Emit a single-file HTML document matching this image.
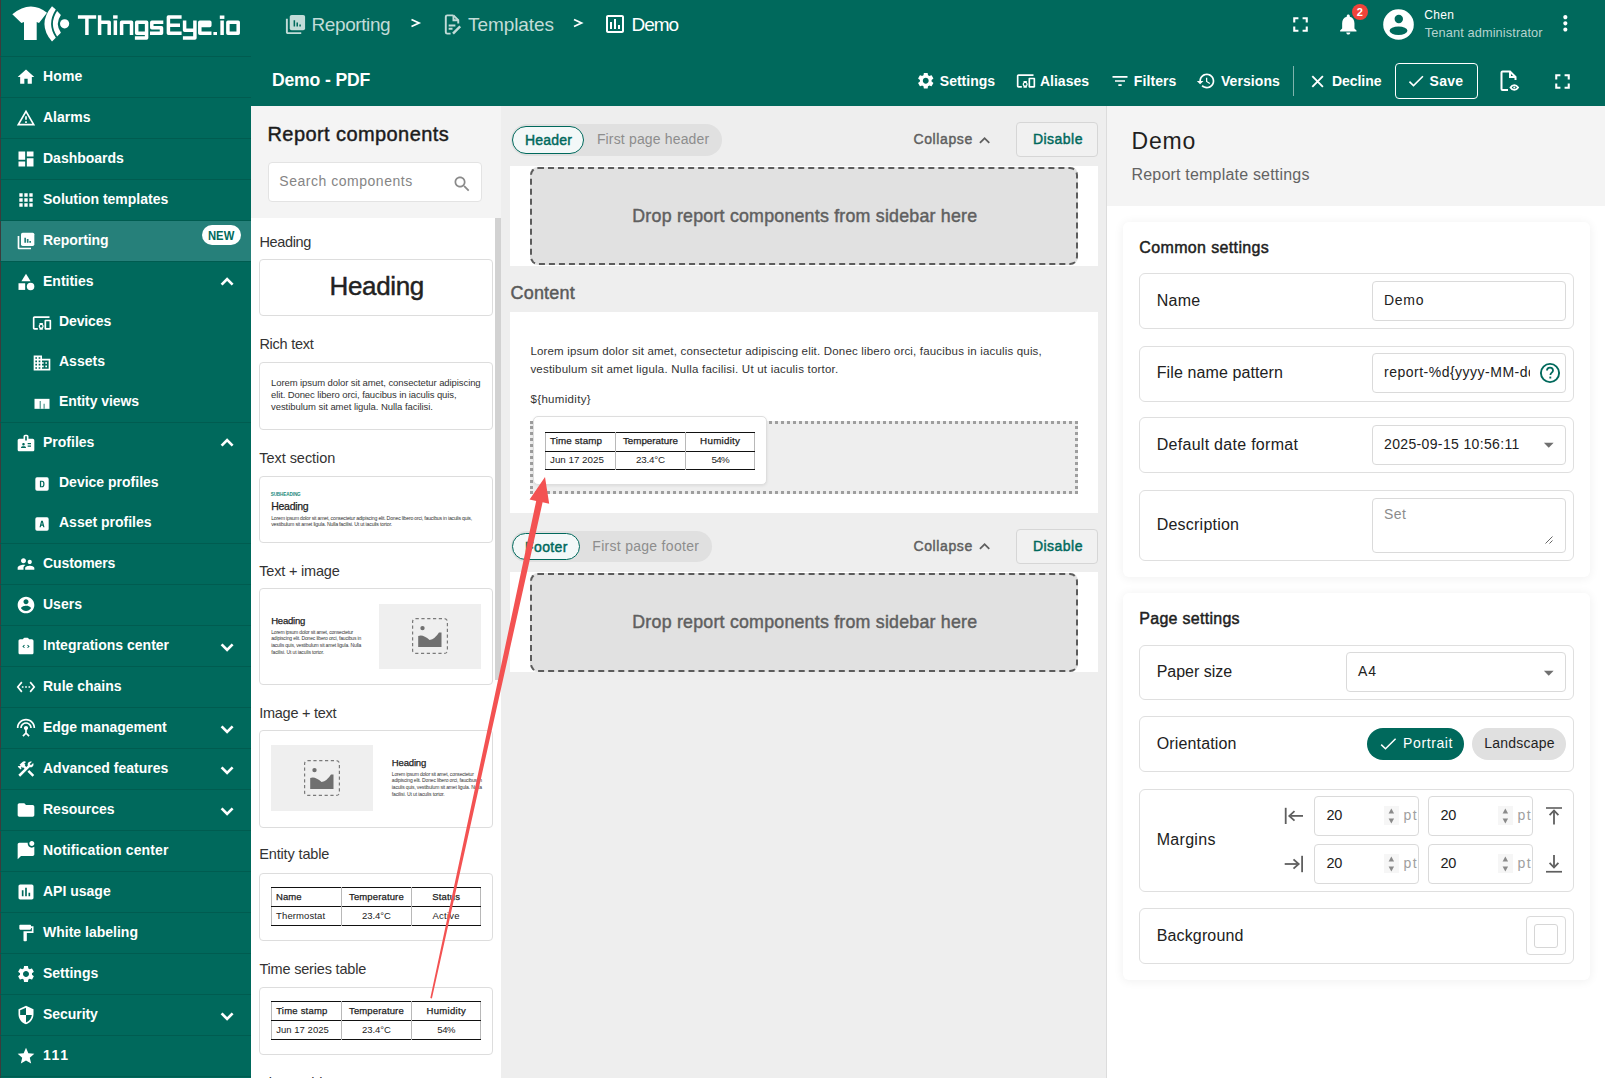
<!DOCTYPE html>
<html><head><meta charset="utf-8">
<style>
*{box-sizing:border-box;margin:0;padding:0}
html,body{width:1605px;height:1078px;overflow:hidden;font-family:"Liberation Sans",sans-serif;background:#fff;position:relative}
.a{position:absolute}
.t{position:absolute;line-height:1;white-space:nowrap}
svg{position:absolute;display:block}
#side{position:absolute;left:0;top:0;width:251px;height:1078px;background:#00695c}
#side .sep{position:absolute;left:0;width:251px;height:1px;background:#005c50}
#side .t{color:#fff;font-weight:bold;font-size:14px}
#side svg{fill:#fff}
#topbar{position:absolute;left:251px;top:0;width:1354px;height:106px;background:#00695c}
#comp{position:absolute;left:251px;top:106px;width:250px;height:972px;background:#fff;overflow:hidden}
#canvas{position:absolute;left:501px;top:106px;width:605px;height:972px;background:#eeeeee;overflow:hidden}
#right{position:absolute;left:1106px;top:106px;width:499px;height:972px;background:#fff;overflow:hidden}
</style></head>
<body>
<div id="side">
  <div class="a" style="left:0;top:0;width:1px;height:1078px;background:#3c3c3c"></div>
  <!-- logo -->
  <svg style="left:0;top:0" width="80" height="50" viewBox="0 0 80 50">
    <path fill="#fff" d="M12.3 14.3 Q30.25 -0.5 47 12.8 L39 23 L36.7 22 L36.7 40 L24 40 L24 22 L21.4 23 Z"></path>
    <path fill="#fff" d="M52 6.2 L55.8 9.6 Q46.4 24 55.8 37.8 L52 41.6 Q36.9 24 52 6.2 Z"></path>
    <path fill="#fff" d="M57.1 11.1 L60.9 15.1 Q54.7 24 60.9 32.7 L57.1 36.5 Q48.7 24 57.1 11.1 Z"></path>
    <circle fill="#fff" cx="64.6" cy="23.8" r="4.6"></circle>
  </svg>
  <svg style="left:0;top:0" width="250" height="50" viewBox="0 0 250 50"><g fill="none" stroke="#fff" stroke-width="3.5" stroke-linejoin="round">
<path d="M77.9 16.9H96.2M86.9 16.9V35"></path>
<path d="M99.6 15.3V35M99.6 22.2H109.2V35"></path>
<path d="M115.35 20.4V35"></path>
<path d="M121.6 35V22.2H131.5V35"></path>
<path d="M146.6 33.3H136.7V22.2H146.6V38H134.9"></path>
<path d="M163.3 22.2H151.8V27.7H161.5V33.3H150"></path>
<path d="M181.6 17H168.4V33.3H181.6M168.4 25.2H180"></path>
<path d="M184.6 20.5V30.2H194.9M194.9 20.5V38H182.9"></path>
<path d="M211.5 33.3H199.8V22.2H209.8V25.5H199.8"></path>
<path d="M222.1 20.5V35"></path>
<path d="M227.9 22.2H238.2V33.3H227.9Z"></path>
</g><g fill="#fff"><rect x="113.1" y="15.3" width="4.5" height="3.4"></rect><rect x="213.4" y="32" width="3.6" height="3"></rect><rect x="219.8" y="15.5" width="4.6" height="3.4"></rect></g></svg>
  <div class="sep" style="top:56px"></div>
  <div id="menu">
<div class="sep" style="top:97px"></div>
<svg style="left:16px;top:67.0px" width="20" height="20" viewBox="0 0 24 24"><path d="M10 20v-6h4v6h5v-8h3L12 3 2 12h3v8z"></path></svg>
<div class="t" style="left: 43px; top: 69.1px; letter-spacing: 0.158px;">Home</div>
<div class="sep" style="top:138px"></div>
<svg style="left:16px;top:108.0px" width="20" height="20" viewBox="0 0 24 24"><path d="M12 5.99L19.53 19H4.47L12 5.99M12 2L1 21h22L12 2zm1 14h-2v2h2v-2zm0-6h-2v4h2v-4z"></path></svg>
<div class="t" style="left:43px;top:110.1px">Alarms</div>
<div class="sep" style="top:179px"></div>
<svg style="left:16px;top:149.0px" width="20" height="20" viewBox="0 0 24 24"><path d="M3 13h8V3H3v10zm0 8h8v-6H3v6zm10 0h8V11h-8v10zm0-18v6h8V3h-8z"></path></svg>
<div class="t" style="left:43px;top:151.1px">Dashboards</div>
<div class="sep" style="top:220px"></div>
<svg style="left:16px;top:190.0px" width="20" height="20" viewBox="0 0 24 24"><path d="M4 8h4V4H4v4zm6 12h4v-4h-4v4zm-6 0h4v-4H4v4zm0-6h4v-4H4v4zm6 0h4v-4h-4v4zm6-10v4h4V4h-4zm-6 4h4V4h-4v4zm6 6h4v-4h-4v4zm0 6h4v-4h-4v4z"></path></svg>
<div class="t" style="left:43px;top:192.1px">Solution templates</div>
<div class="a" style="left:1px;top:221px;width:250px;height:40px;background:#26807a"></div>
<div class="sep" style="top:261px"></div>
<svg style="left:16px;top:231.0px" width="20" height="20" viewBox="0 0 24 24"><path d="M4 6H2v14c0 1.1.9 2 2 2h14v-2H4V6z"></path><rect x="6" y="2" width="16" height="16" rx="2"></rect><path fill="#26807a" d="M10 14h2V8h-2zm3 0h2V9.5h-2zm3 0h2v-2h-2z"></path></svg>
<div class="t" style="left: 43px; top: 233.1px; letter-spacing: -0.054px;">Reporting</div>
<div class="a" style="left:202px;top:225px;width:39px;height:20px;border-radius:10px;background:#fff"></div>
<div class="t" style="left:208.3px;top:230px;font-size:12.5px;color:#00695c;transform:scaleX(0.9);transform-origin:0 0">NEW</div>
<svg style="left:16px;top:272.0px" width="20" height="20" viewBox="0 0 24 24"><path d="M12 2l-5.5 9h11z"></path><circle cx="17.5" cy="17.5" r="4.5"></circle><path d="M3 13.5h8v8H3z"></path></svg>
<div class="t" style="left:43px;top:274.1px">Entities</div>
<svg style="left:0;top:0;overflow:visible" width="1" height="1"><polyline points="221.6,284.6 227.1,279.1 232.6,284.6" fill="none" stroke="#fff" stroke-width="2.7"></polyline></svg>
<svg style="left:32px;top:312.5px" width="20" height="20" viewBox="0 0 24 24"><path d="M3 6h18V4H3c-1.1 0-2 .9-2 2v12c0 1.1.9 2 2 2h4v-2H3V6zm10 6H9v1.78c-.61.55-1 1.33-1 2.22s.39 1.67 1 2.22V20h4v-1.78c.61-.55 1-1.34 1-2.22s-.39-1.67-1-2.22V12zm-2 5.5c-.83 0-1.5-.67-1.5-1.5s.67-1.5 1.5-1.5 1.5.67 1.5 1.5-.67 1.5-1.5 1.5zM22 8h-6c-.5 0-1 .5-1 1v10c0 .5.5 1 1 1h6c.5 0 1-.5 1-1V9c0-.5-.5-1-1-1zm-1 10h-4v-8h4v8z"></path></svg>
<div class="t" style="left: 59px; top: 314px; letter-spacing: -0.126px;">Devices</div>
<svg style="left:32px;top:352.5px" width="20" height="20" viewBox="0 0 24 24"><path d="M12 7V3H2v18h20V7H12zM6 19H4v-2h2v2zm0-4H4v-2h2v2zm0-4H4V9h2v2zm0-4H4V5h2v2zm4 12H8v-2h2v2zm0-4H8v-2h2v2zm0-4H8V9h2v2zm0-4H8V5h2v2zm10 12h-8v-2h2v-2h-2v-2h2v-2h-2V9h8v10zm-2-8h-2v2h2v-2zm0 4h-2v2h2v-2z"></path></svg>
<div class="t" style="left:59px;top:354.0px">Assets</div>
<div class="sep" style="top:422px"></div>
<svg style="left:32px;top:392.5px" width="20" height="20" viewBox="0 0 24 24"><path d="M3 7h18v12H3z"></path><path fill="#00695c" d="M9.3 9.5h1v9.5h-1zM14 13h1v6h-1z"></path></svg>
<div class="t" style="left: 59px; top: 394px; letter-spacing: -0.086px;">Entity views</div>
<svg style="left:16px;top:433.0px" width="20" height="20" viewBox="0 0 24 24"><path d="M20 7h-5V4c0-1.1-.9-2-2-2h-2c-1.1 0-2 .9-2 2v3H4c-1.1 0-2 .9-2 2v11c0 1.1.9 2 2 2h16c1.1 0 2-.9 2-2V9c0-1.1-.9-2-2-2zM9 12c.83 0 1.5.67 1.5 1.5S9.83 15 9 15s-1.5-.67-1.5-1.5S8.17 12 9 12zm3 6H6v-.43c0-.6.36-1.15.92-1.39.64-.28 1.34-.43 2.08-.43s1.44.15 2.08.43c.55.24.92.78.92 1.39V18zm1-9h-2V4h2v5zm5 7.5h-4V15h4v1.5zm0-3h-4V12h4v1.5z"></path></svg>
<div class="t" style="left:43px;top:435.1px">Profiles</div>
<svg style="left:0;top:0;overflow:visible" width="1" height="1"><polyline points="221.6,445.6 227.1,440.1 232.6,445.6" fill="none" stroke="#fff" stroke-width="2.7"></polyline></svg>
<svg style="left:32px;top:473.5px" width="20" height="20" viewBox="0 0 24 24"><rect x="4" y="4" width="16" height="16" rx="2"></rect><path fill="#00695c" d="M9.5 8h2.5c2 0 3 1.3 3 4s-1 4-3 4H9.5zM11 9.4v5.2h1c1 0 1.5-.8 1.5-2.6s-.5-2.6-1.5-2.6z"></path></svg>
<div class="t" style="left:59px;top:475.0px">Device profiles</div>
<div class="sep" style="top:543px"></div>
<svg style="left:32px;top:513.5px" width="20" height="20" viewBox="0 0 24 24"><rect x="4" y="4" width="16" height="16" rx="2"></rect><path fill="#00695c" d="M9 16l2-8h2l2 8h-1.5l-.45-2h-2.1l-.45 2zm2.35-3.3h1.3L12 9.8z"></path></svg>
<div class="t" style="left:59px;top:515.0px">Asset profiles</div>
<div class="sep" style="top:584px"></div>
<svg style="left:16px;top:554.0px" width="20" height="20" viewBox="0 0 24 24"><path d="M16.5 12c1.38 0 2.49-1.12 2.49-2.5S17.88 7 16.5 7C15.12 7 14 8.12 14 9.5s1.12 2.5 2.5 2.5zM9 11c1.66 0 2.99-1.34 2.99-3S10.66 5 9 5C7.34 5 6 6.34 6 8s1.34 3 3 3zm7.5 3c-1.83 0-5.5.92-5.5 2.75V19h11v-2.25c0-1.830-3.67-2.75-5.5-2.75zM9 13c-2.33 0-7 1.17-7 3.5V19h7v-2.25c0-.85.33-2.34 2.37-3.47C10.5 13.1 9.66 13 9 13z"></path></svg>
<div class="t" style="left: 43px; top: 556.1px; letter-spacing: -0.095px;">Customers</div>
<div class="sep" style="top:625px"></div>
<svg style="left:16px;top:595.0px" width="20" height="20" viewBox="0 0 24 24"><path d="M12 2C6.48 2 2 6.48 2 12s4.48 10 10 10 10-4.48 10-10S17.52 2 12 2zm0 3c1.66 0 3 1.34 3 3s-1.34 3-3 3-3-1.34-3-3 1.34-3 3-3zm0 14.2c-2.5 0-4.71-1.28-6-3.22.03-1.99 4-3.08 6-3.08 1.99 0 5.970 1.09 6 3.08-1.29 1.94-3.5 3.22-6 3.22z"></path></svg>
<div class="t" style="left:43px;top:597.1px">Users</div>
<div class="sep" style="top:666px"></div>
<svg style="left:16px;top:636.0px" width="20" height="20" viewBox="0 0 24 24"><path d="M19 4h-3.2C15.4 2.8 14.3 2 13 2h-2c-1.3 0-2.4.8-2.8 2H5c-1.1 0-2 .9-2 2v14c0 1.1.9 2 2 2h14c1.1 0 2-.9 2-2V6c0-1.1-.9-2-2-2z"></path><path fill="#00695c" d="M9.8 10.5l-2.2 2 2.2 2 .8-.8-1.4-1.2 1.4-1.2zm4.4 0l-.8.8 1.4 1.2-1.4 1.2.8.8 2.2-2z"></path></svg>
<div class="t" style="left:43px;top:638.1px">Integrations center</div>
<svg style="left:0;top:0;overflow:visible" width="1" height="1"><polyline points="221.6,644.4 227.1,649.9 232.6,644.4" fill="none" stroke="#fff" stroke-width="2.7"></polyline></svg>
<div class="sep" style="top:707px"></div>
<svg style="left:16px;top:677.0px" width="20" height="20" viewBox="0 0 24 24"><path d="M7.77 6.76L6.23 5.48.82 12l5.41 6.52 1.54-1.28L3.42 12l4.35-5.24zM7 13h2v-2H7v2zm10-2h-2v2h2v-2zm-6 2h2v-2h-2v2zm6.77-7.52l-1.54 1.28L20.58 12l-4.35 5.24 1.54 1.28L23.18 12l-5.41-6.52z"></path></svg>
<div class="t" style="left:43px;top:679.1px">Rule chains</div>
<div class="sep" style="top:748px"></div>
<svg style="left:16px;top:718.0px" width="20" height="20" viewBox="0 0 24 24"><path d="M12 5c-3.87 0-7 3.13-7 7h2c0-2.76 2.24-5 5-5s5 2.24 5 5h2c0-3.87-3.13-7-7-7zm1 9.29c.88-.39 1.5-1.26 1.5-2.29 0-1.38-1.12-2.5-2.5-2.5S9.5 10.62 9.5 12c0 1.02.62 1.9 1.5 2.29v3.3L7.59 21 9 22.41l3-3 3 3L16.41 21 13 17.59v-3.3zM12 1C5.930 1 1 5.93 1 12h2c0-4.97 4.03-9 9-9s9 4.03 9 9h2c0-6.07-4.93-11-11-11z"></path></svg>
<div class="t" style="left: 43px; top: 720.1px; letter-spacing: -0.05px;">Edge management</div>
<svg style="left:0;top:0;overflow:visible" width="1" height="1"><polyline points="221.6,726.4 227.1,731.9 232.6,726.4" fill="none" stroke="#fff" stroke-width="2.7"></polyline></svg>
<div class="sep" style="top:789px"></div>
<svg style="left:16px;top:759.0px" width="20" height="20" viewBox="0 0 24 24"><path d="M13.78 15.3l6 6 2.11-2.16-6-6zM17.5 10c1.93 0 3.5-1.57 3.5-3.5 0-.58-.16-1.12-.41-1.6l-2.7 2.7-1.49-1.49 2.7-2.7c-.48-.25-1.020-.41-1.6-.41C15.57 3 14 4.57 14 6.5c0 .41.08.8.21 1.16l-1.85 1.85-1.78-1.78.71-.71-1.41-1.41L12 3.49c-1.17-1.17-3.07-1.17-4.24 0L4.22 7.03l1.41 1.41H2.81l-.71.71 3.54 3.54.71-.71V9.15l1.41 1.41.71-.71 1.78 1.78-7.41 7.41 2.12 2.12L16.34 9.790c.36.13.75.21 1.16.21z"></path></svg>
<div class="t" style="left:43px;top:761.1px">Advanced features</div>
<svg style="left:0;top:0;overflow:visible" width="1" height="1"><polyline points="221.6,767.4 227.1,772.9 232.6,767.4" fill="none" stroke="#fff" stroke-width="2.7"></polyline></svg>
<div class="sep" style="top:830px"></div>
<svg style="left:16px;top:800.0px" width="20" height="20" viewBox="0 0 24 24"><path d="M10 4H4c-1.1 0-1.99.9-1.99 2L2 18c0 1.1.9 2 2 2h16c1.1 0 2-.9 2-2V8c0-1.1-.9-2-2-2h-8l-2-2z"></path></svg>
<div class="t" style="left:43px;top:802.1px">Resources</div>
<svg style="left:0;top:0;overflow:visible" width="1" height="1"><polyline points="221.6,808.4 227.1,813.9 232.6,808.4" fill="none" stroke="#fff" stroke-width="2.7"></polyline></svg>
<div class="sep" style="top:871px"></div>
<svg style="left:16px;top:841.0px" width="20" height="20" viewBox="0 0 24 24"><path d="M22 6.98V16c0 1.1-.9 2-2 2H6l-4 4V4c0-1.1.9-2 2-2h10.1c-.06.32-.1.66-.1 1 0 2.76 2.24 5 5 5 1.13 0 2.16-.39 3-1.02zM16 3c0 1.66 1.34 3 3 3s3-1.34 3-3-1.34-3-3-3-3 1.34-3 3z"></path></svg>
<div class="t" style="left: 43px; top: 843.1px; letter-spacing: 0.143px;">Notification center</div>
<div class="sep" style="top:912px"></div>
<svg style="left:16px;top:882.0px" width="20" height="20" viewBox="0 0 24 24"><path d="M19 3H5c-1.1 0-2 .9-2 2v14c0 1.1.9 2 2 2h14c1.1 0 2-.9 2-2V5c0-1.1-.9-2-2-2zM9 17H7v-7h2v7zm4 0h-2V7h2v10zm4 0h-2v-4h2v4z"></path></svg>
<div class="t" style="left:43px;top:884.1px">API usage</div>
<div class="sep" style="top:953px"></div>
<svg style="left:16px;top:923.0px" width="20" height="20" viewBox="0 0 24 24"><path d="M18 4V3c0-.55-.45-1-1-1H5c-.55 0-1 .45-1 1v4c0 .55.45 1 1 1h12c.55 0 1-.45 1-1V6h1v4H9v11c0 .55.45 1 1 1h2c.55 0 1-.45 1-1v-9h8V4h-3z"></path></svg>
<div class="t" style="left: 43px; top: 925.1px; letter-spacing: 0.007px;">White labeling</div>
<div class="sep" style="top:994px"></div>
<svg style="left:16px;top:964.0px" width="20" height="20" viewBox="0 0 24 24"><path d="M19.14 12.94c.04-.3.06-.61.06-.94 0-.32-.02-.64-.07-.94l2.03-1.58c.18-.14.23-.41.12-.61l-1.92-3.32c-.12-.22-.37-.29-.59-.22l-2.39.96c-.5-.38-1.03-.7-1.62-.94l-.36-2.54c-.04-.24-.24-.41-.48-.41h-3.84c-.24 0-.43.17-.47.41l-.36 2.54c-.59.24-1.13.57-1.62.94l-2.39-.96c-.22-.08-.47 0-.59.22L2.74 8.87c-.12.21-.08.47.12.61l2.03 1.58c-.05.3-.09.63-.09.94s.02.64.07.94l-2.03 1.58c-.18.14-.23.41-.12.61l1.92 3.32c.12.22.37.29.59.22l2.39-.96c.5.38 1.03.7 1.62.94l.36 2.54c.05.24.24.41.48.41h3.84c.24 0 .44-.17.47-.41l.36-2.54c.59-.24 1.13-.56 1.62-.94l2.39.96c.22.08.47 0 .59-.22l1.92-3.32c.12-.22.07-.47-.12-.61l-2.01-1.58zM12 15.6c-1.98 0-3.6-1.62-3.6-3.6s1.62-3.6 3.6-3.6 3.6 1.62 3.6 3.6-1.62 3.6-3.6 3.6z"></path></svg>
<div class="t" style="left:43px;top:966.1px">Settings</div>
<div class="sep" style="top:1035px"></div>
<svg style="left:16px;top:1005.0px" width="20" height="20" viewBox="0 0 24 24"><path d="M12 1L3 5v6c0 5.55 3.84 10.74 9 12 5.16-1.26 9-6.45 9-12V5l-9-4zm0 10.99h7c-.53 4.12-3.28 7.79-7 8.94V12H5V6.3l7-3.11v8.8z"></path></svg>
<div class="t" style="left: 43px; top: 1007.1px; letter-spacing: -0.053px;">Security</div>
<svg style="left:0;top:0;overflow:visible" width="1" height="1"><polyline points="221.6,1013.4 227.1,1018.9 232.6,1013.4" fill="none" stroke="#fff" stroke-width="2.7"></polyline></svg>
<div class="sep" style="top:1076px"></div>
<svg style="left:16px;top:1046.0px" width="20" height="20" viewBox="0 0 24 24"><path d="M12 17.27L18.18 21l-1.64-7.03L22 9.24l-7.19-.61L12 2 9.19 8.63 2 9.24l5.46 4.73L5.82 21z"></path></svg>
<div class="t" style="left: 43px; top: 1048.1px; letter-spacing: 1.576px;">111</div>
</div><!--menu-->
</div>
<div id="topbar">
</div>
<!-- topbar content (absolute page coords) -->
<div id="tb">
  <!-- breadcrumb -->
  <svg style="left:283.5px;top:12.5px" width="23" height="23" viewBox="0 0 24 24" fill="#c2dcd8"><path d="M4 6H2v14c0 1.1.9 2 2 2h14v-2H4V6z"></path><rect x="6" y="2" width="16" height="16" rx="2"></rect><path fill="#00695c" d="M10 14h1.6V7.5H10zm3 0h1.6V10h-1.6zm3 0h1.6v-2H16z"></path></svg>
  <div class="t" style="left: 311.5px; top: 14.9px; font-size: 19px; color: rgb(194, 220, 216); letter-spacing: -0.408px;">Reporting</div>
  <svg style="left:0;top:0" width="700" height="50" viewBox="0 0 700 50"><polyline points="411.5,19.5 419,23 411.5,26.5" fill="none" stroke="#fff" stroke-width="1.8"></polyline><polyline points="574,19.5 581.5,23 574,26.5" fill="none" stroke="#fff" stroke-width="1.8"></polyline></svg>
  <svg style="left:441px;top:12.5px" width="23" height="23" viewBox="0 0 24 24" fill="none" stroke="#c2dcd8" stroke-width="2"><path d="M13 2.5H6.5c-1 0-1.5.6-1.5 1.5v16c0 .9.5 1.5 1.5 1.5H10"></path><path d="M13 2.5l5 5V11"></path><path d="M13 2.5V7.5h5"></path><path d="M8 13h7M8 16.5h4"></path><path d="M12.5 21.5l7.5-7.5" stroke-width="2.6"></path></svg>
  <div class="t" style="left: 468px; top: 14.9px; font-size: 19px; color: rgb(194, 220, 216); letter-spacing: -0.072px;">Templates</div>
  <svg style="left:603px;top:12px" width="24" height="24" viewBox="0 0 24 24" fill="#fff"><path d="M9 17H7v-7h2v7zm4 0h-2V7h2v10zm4 0h-2v-4h2v4zm2 2H5V5h14v14.1V19zm0-16H5c-1.1 0-2 .9-2 2v14c0 1.1.9 2 2 2h14c1.1 0 2-.9 2-2V5c0-1.1-.9-2-2-2z"></path></svg>
  <div class="t" style="left: 631.5px; top: 14.9px; font-size: 19px; color: rgb(255, 255, 255); letter-spacing: -1.052px;">Demo</div>
  <!-- right icons -->
  <svg style="left:1287.8px;top:11.8px" width="25" height="25" viewBox="0 0 24 24" fill="#fff"><path d="M7 14H5v5h5v-2H7v-3zm-2-4h2V7h3V5H5v5zm12 7h-3v2h5v-5h-2v3zM14 5v2h3v3h2V5h-5z"></path></svg>
  <svg style="left:1335.5px;top:11.8px" width="24.6" height="24.6" viewBox="0 0 24 24" fill="#fff"><path d="M12 22c1.1 0 2-.9 2-2h-4c0 1.1.89 2 2 2zm6-6v-5c0-3.07-1.64-5.640-4.5-6.32V4c0-.83-.67-1.5-1.5-1.5s-1.5.67-1.5 1.5v.68C7.63 5.36 6 7.92 6 11v5l-2 2v1h16v-1l-2-2z"></path></svg>
  <div class="a" style="left:1351.8px;top:4px;width:16.4px;height:16.4px;border-radius:50%;background:#f0433a"></div>
  <div class="t" style="left:1356.8px;top:7px;font-size:11px;font-weight:bold;color:#fff">2</div>
  <svg style="left:1382.5px;top:8.5px" width="31" height="31" viewBox="0 0 31 31"><circle cx="15.5" cy="15.5" r="15.3" fill="#fff"></circle><circle cx="15.8" cy="10" r="4.2" fill="#00695c"></circle><ellipse cx="15.5" cy="21.8" rx="8.9" ry="4.2" fill="#00695c"></ellipse></svg>
  <div class="t" style="left: 1424.2px; top: 9px; font-size: 12px; color: rgb(255, 255, 255); letter-spacing: 0.384px;">Chen</div>
  <div class="t" style="left: 1424.8px; top: 26.7px; font-size: 12.8px; color: rgb(181, 211, 207); letter-spacing: 0.097px;">Tenant administrator</div>
  <svg style="left:1553.4px;top:11.4px" width="24.7" height="24.7" viewBox="0 0 24 24" fill="#fff"><path d="M12 8c1.1 0 2-.9 2-2s-.9-2-2-2-2 .9-2 2 .9 2 2 2zm0 2c-1.1 0-2 .9-2 2s.9 2 2 2 2-.9 2-2-.9-2-2-2zm0 6c-1.1 0-2 .9-2 2s.9 2 2 2 2-.9 2-2-.9-2-2-2z"></path></svg>
  <!-- row 2 -->
  <div class="t" style="left: 271.9px; top: 71.9px; font-size: 17.6px; font-weight: bold; color: rgb(255, 255, 255); letter-spacing: -0.143px;">Demo - PDF</div>
  <svg style="left:915.5px;top:71.3px" width="19.5" height="19.5" viewBox="0 0 24 24" fill="#fff"><path d="M19.14 12.94c.04-.3.06-.61.06-.94 0-.32-.02-.64-.07-.94l2.03-1.58c.18-.14.23-.41.12-.61l-1.92-3.32c-.12-.22-.37-.29-.59-.22l-2.39.96c-.5-.38-1.03-.7-1.62-.94l-.36-2.54c-.04-.24-.24-.41-.48-.41h-3.84c-.24 0-.43.17-.47.41l-.36 2.54c-.59.24-1.13.57-1.62.94l-2.39-.96c-.22-.08-.47 0-.59.22L2.74 8.87c-.12.21-.08.47.12.61l2.03 1.58c-.05.3-.09.63-.09.94s.02.64.07.94l-2.03 1.58c-.18.14-.23.41-.12.61l1.92 3.32c.12.22.37.29.59.22l2.39-.96c.5.38 1.03.7 1.62.94l.36 2.54c.05.24.24.41.48.41h3.84c.24 0 .44-.17.47-.41l.36-2.54c.59-.24 1.13-.56 1.62-.94l2.39.96c.22.08.47 0 .59-.22l1.92-3.32c.12-.22.07-.47-.12-.61l-2.01-1.58zM12 15.6c-1.98 0-3.6-1.62-3.6-3.6s1.62-3.6 3.6-3.6 3.6 1.62 3.6 3.6-1.62 3.6-3.6 3.6z"></path></svg>
  <div class="t" style="left: 939.8px; top: 73.8px; font-size: 14px; font-weight: bold; color: rgb(255, 255, 255); letter-spacing: 0.007px;">Settings</div>
  <svg style="left:1016px;top:71px" width="20" height="20" viewBox="0 0 24 24" fill="#fff"><path d="M3 6h18V4H3c-1.1 0-2 .9-2 2v12c0 1.1.9 2 2 2h4v-2H3V6zm10 6H9v1.78c-.61.55-1 1.33-1 2.22s.39 1.67 1 2.22V20h4v-1.78c.61-.55 1-1.34 1-2.22s-.39-1.67-1-2.22V12zm-2 5.5c-.83 0-1.5-.67-1.5-1.5s.67-1.5 1.5-1.5 1.5.67 1.5 1.5-.67 1.5-1.5 1.5zM22 8h-6c-.5 0-1 .5-1 1v10c0 .5.5 1 1 1h6c.5 0 1-.5 1-1V9c0-.5-.5-1-1-1zm-1 10h-4v-8h4v8z"></path></svg>
  <div class="t" style="left: 1040px; top: 73.8px; font-size: 14px; font-weight: bold; color: rgb(255, 255, 255); letter-spacing: -0.011px;">Aliases</div>
  <svg style="left:1109.5px;top:71px" width="20" height="20" viewBox="0 0 24 24" fill="#fff"><path d="M10 18h4v-2h-4v2zM3 6v2h18V6H3zm3 7h12v-2H6v2z"></path></svg>
  <div class="t" style="left: 1133.8px; top: 73.8px; font-size: 14px; font-weight: bold; color: rgb(255, 255, 255); letter-spacing: 0.094px;">Filters</div>
  <svg style="left:1196px;top:71px" width="20" height="20" viewBox="0 0 24 24" fill="#fff"><path d="M13 3c-4.97 0-9 4.03-9 9H1l3.89 3.89.07.14L9 12H6c0-3.87 3.13-7 7-7s7 3.13 7 7-3.13 7-7 7c-1.93 0-3.68-.79-4.94-2.06l-1.42 1.42C8.27 19.99 10.51 21 13 21c4.97 0 9-4.03 9-9s-4.03-9-9-9zm-1 5v5l4.28 2.54.72-1.21-3.5-2.08V8H12z"></path></svg>
  <div class="t" style="left: 1221px; top: 73.8px; font-size: 14px; font-weight: bold; color: rgb(255, 255, 255); letter-spacing: 0.058px;">Versions</div>
  <div class="a" style="left:1293px;top:66px;width:1px;height:30px;background:#7fb4ad"></div>
  <svg style="left:1305px;top:70px" width="24" height="24" viewBox="1305 70 24 24"><path d="M1312.3 76.2L1322.9 86.8M1322.9 76.2L1312.3 86.8" stroke="#fff" stroke-width="1.9" fill="none"></path></svg>
  <div class="t" style="left: 1331.9px; top: 73.8px; font-size: 14px; font-weight: bold; color: rgb(255, 255, 255); letter-spacing: -0.039px;">Decline</div>
  <div class="a" style="left:1395px;top:63px;width:83px;height:35.5px;border:1px solid #fff;border-radius:4px"></div>
  <svg style="left:1405.5px;top:71px" width="20" height="20" viewBox="0 0 24 24" fill="#fff"><path d="M9 16.17L4.83 12l-1.42 1.41L9 19 21 7l-1.41-1.41z"></path></svg>
  <div class="t" style="left: 1429.6px; top: 73.8px; font-size: 14px; font-weight: bold; color: rgb(255, 255, 255); letter-spacing: 0.226px;">Save</div>
  <svg style="left:1497px;top:69px" width="24" height="24" viewBox="0 0 24 24" fill="none" stroke="#fff" stroke-width="2"><path d="M11 21H5.5c-.6 0-1-.4-1-1V3.5c0-.6.4-1 1-1H13l5.5 5.5V11"></path><path d="M13 2.5V8h5.5"></path><path d="M13.5 18.5c1-1.6 2.3-2.4 3.8-2.4s2.8.8 3.8 2.4c-1 1.6-2.3 2.4-3.8 2.4s-2.8-.8-3.8-2.4z" stroke-width="1.8"></path><circle cx="17.3" cy="18.5" r="1" fill="#fff" stroke="none"></circle></svg>
  <svg style="left:1549.5px;top:68.5px" width="25" height="25" viewBox="0 0 24 24" fill="#fff"><path d="M7 14H5v5h5v-2H7v-3zm-2-4h2V7h3V5H5v5zm12 7h-3v2h5v-5h-2v3zM14 5v2h3v3h2V5h-5z"></path></svg>
</div>
<div id="comp"></div>
<div id="canvas"></div>
<div id="right"></div>
<!--COMP-->
<div class="a" style="left:251px;top:106px;width:250px;height:112px;background:#f4f4f4"></div>
<div class="t" style="left: 267.5px; top: 123.87px; font-size: 20px; -webkit-text-stroke: 0.45px rgb(28, 28, 28); color: rgb(28, 28, 28); letter-spacing: 0.416px;">Report components</div>
<div class="a" style="left:267.5px;top:162.3px;width:214px;height:39.4px;background:#fff;border:1px solid #e3e3e3;border-radius:4px"></div>
<div class="t" style="left: 279.3px; top: 174.05px; font-size: 14px; color: rgb(133, 133, 133); letter-spacing: 0.522px;">Search components</div>
<svg style="left:451.7px;top:174px" width="20.3" height="20.3" viewBox="0 0 24 24" fill="#8a8a8a"><path d="M15.5 14h-.79l-.28-.27C15.41 12.59 16 11.11 16 9.5 16 5.91 13.09 3 9.5 3S3 5.910 3 9.5 5.91 16 9.5 16c1.61 0 3.09-.59 4.23-1.57l.27.28v.79l5 4.99L20.49 19l-4.99-5zm-6 0C7.01 14 5 11.99 5 9.5S7.01 5 9.5 5 14 7.01 14 9.5 11.99 14 9.5 14z"></path></svg>
<div class="a" style="left:495px;top:218px;width:6px;height:462px;background:#d2d2d2"></div>
<div class="t" style="left: 259.4px; top: 235.33px; font-size: 14.5px; color: rgb(51, 51, 51); letter-spacing: -0.35px;">Heading</div>
<div class="a" style="left:259.4px;top:259.3px;width:233.60000000000002px;height:56.9px;border:1px solid #dddddd;border-radius:4px;background:#fff"></div>
<div class="t" style="left: 329.5px; top: 273.09px; font-size: 26px; -webkit-text-stroke: 0.45px rgb(34, 34, 34); color: rgb(34, 34, 34); letter-spacing: -0.357px;">Heading</div>
<div class="t" style="left: 259.4px; top: 336.73px; font-size: 14.5px; color: rgb(51, 51, 51); letter-spacing: -0.238px;">Rich text</div>
<div class="a" style="left:259.4px;top:361.5px;width:233.60000000000002px;height:68.6px;border:1px solid #dddddd;border-radius:4px;background:#fff"></div>
<div class="t" style="left: 271px; top: 377.56px; font-size: 9.5px; color: rgb(51, 51, 51); letter-spacing: -0.086px;">Lorem ipsum dolor sit amet, consectetur adipiscing</div>
<div class="t" style="left: 271px; top: 390.06px; font-size: 9.5px; color: rgb(51, 51, 51); letter-spacing: -0.114px;">elit. Donec libero orci, faucibus in iaculis quis,</div>
<div class="t" style="left: 271px; top: 402.46px; font-size: 9.5px; color: rgb(51, 51, 51); letter-spacing: -0.053px;">vestibulum sit amet ligula. Nulla facilisi.</div>
<div class="t" style="left: 259.2px; top: 450.63px; font-size: 14.5px; color: rgb(51, 51, 51); letter-spacing: -0.033px;">Text section</div>
<div class="a" style="left:259.4px;top:475.5px;width:233.60000000000002px;height:67.9px;border:1px solid #dddddd;border-radius:4px;background:#fff"></div>
<div class="t" style="left: 270.7px; top: 492.71px; font-size: 4.6px; font-weight: bold; color: rgb(27, 138, 124); letter-spacing: -0.097px;">SUBHEADING</div>
<div class="t" style="left: 271.2px; top: 500.81px; font-size: 10.5px; -webkit-text-stroke: 0.25px rgb(34, 34, 34); color: rgb(34, 34, 34); letter-spacing: -0.265px;">Heading</div>
<div class="t" style="left: 271.2px; top: 516.2px; font-size: 5.2px; color: rgb(51, 51, 51); letter-spacing: -0.216px;">Lorem ipsum dolor sit amet, consectetur adipiscing elit. Donec libero orci, faucibus in iaculis quis,</div>
<div class="t" style="left: 271.2px; top: 522.4px; font-size: 5.2px; color: rgb(51, 51, 51); letter-spacing: -0.182px;">vestibulum sit amet ligula. Nulla facilisi. Ut ut iaculis tortor.</div>
<div class="t" style="left: 259.2px; top: 564.03px; font-size: 14.5px; color: rgb(51, 51, 51); letter-spacing: -0.183px;">Text + image</div>
<div class="a" style="left:259.4px;top:588.3px;width:233.60000000000002px;height:96.9px;border:1px solid #dddddd;border-radius:4px;background:#fff"></div>
<div class="t" style="left: 271.2px; top: 615.96px; font-size: 9.5px; -webkit-text-stroke: 0.25px rgb(34, 34, 34); color: rgb(34, 34, 34); letter-spacing: -0.204px;">Heading</div>
<div class="t" style="left: 271.2px; top: 629.67px; font-size: 5px; color: rgb(51, 51, 51); letter-spacing: -0.181px;">Lorem ipsum dolor sit amet, consectetur</div>
<div class="t" style="left: 271.2px; top: 636.37px; font-size: 5px; color: rgb(51, 51, 51); letter-spacing: -0.149px;">adipiscing elit. Donec libero orci, faucibus in</div>
<div class="t" style="left: 271.2px; top: 643.07px; font-size: 5px; color: rgb(51, 51, 51); letter-spacing: -0.155px;">iaculis quis, vestibulum sit amet ligula. Nulla</div>
<div class="t" style="left: 271.2px; top: 649.77px; font-size: 5px; color: rgb(51, 51, 51); letter-spacing: -0.115px;">facilisi. Ut ut iaculis tortor.</div>
<div class="a" style="left:379px;top:603.6px;width:102px;height:65.60000000000002px;background:#efefef"></div>
<svg style="left:411.8px;top:618.2px" width="36" height="36" viewBox="0 0 36 36"><rect x="0.6" y="0.6" width="34.8" height="34.8" rx="3" fill="none" stroke="#7a7a7a" stroke-width="1.2" stroke-dasharray="3.2 2.6"></rect><circle cx="10.5" cy="10.1" r="2.2" fill="#707070"></circle><path d="M6.2 18 Q11 16 17.6 22 Q23 21 27 14.5 L29.5 14.5 L29.5 29.1 L6.2 29.1 Z" fill="#707070"></path></svg>
<div class="t" style="left: 259.2px; top: 705.73px; font-size: 14.5px; color: rgb(51, 51, 51); letter-spacing: -0.253px;">Image + text</div>
<div class="a" style="left:259.4px;top:730px;width:233.60000000000002px;height:97.50000000000003px;border:1px solid #dddddd;border-radius:4px;background:#fff"></div>
<div class="a" style="left:271px;top:745.3px;width:102px;height:66.10000000000002px;background:#efefef"></div>
<svg style="left:304px;top:760.3px" width="36" height="36" viewBox="0 0 36 36"><rect x="0.6" y="0.6" width="34.8" height="34.8" rx="3" fill="none" stroke="#7a7a7a" stroke-width="1.2" stroke-dasharray="3.2 2.6"></rect><circle cx="10.5" cy="10.1" r="2.2" fill="#707070"></circle><path d="M6.2 18 Q11 16 17.6 22 Q23 21 27 14.5 L29.5 14.5 L29.5 29.1 L6.2 29.1 Z" fill="#707070"></path></svg>
<div class="t" style="left: 391.8px; top: 758.26px; font-size: 9.5px; -webkit-text-stroke: 0.25px rgb(34, 34, 34); color: rgb(34, 34, 34); letter-spacing: -0.154px;">Heading</div>
<div class="t" style="left: 391.8px; top: 771.77px; font-size: 5px; color: rgb(51, 51, 51); letter-spacing: -0.181px;">Lorem ipsum dolor sit amet, consectetur</div>
<div class="t" style="left: 391.8px; top: 778.47px; font-size: 5px; color: rgb(51, 51, 51); letter-spacing: -0.149px;">adipiscing elit. Donec libero orci, faucibus in</div>
<div class="t" style="left: 391.8px; top: 785.17px; font-size: 5px; color: rgb(51, 51, 51); letter-spacing: -0.155px;">iaculis quis, vestibulum sit amet ligula. Nulla</div>
<div class="t" style="left: 391.8px; top: 791.87px; font-size: 5px; color: rgb(51, 51, 51); letter-spacing: -0.115px;">facilisi. Ut ut iaculis tortor.</div>
<div class="t" style="left: 259.2px; top: 847.43px; font-size: 14.5px; color: rgb(51, 51, 51); letter-spacing: -0.14px;">Entity table</div>
<div class="a" style="left:259.4px;top:872.5px;width:233.60000000000002px;height:68.9px;border:1px solid #dddddd;border-radius:4px;background:#fff"></div>
<div class="a" style="left:270.6px;top:887px;width:210.39999999999998px;height:38.60000000000002px;border-left:1px solid #b8b8b8;border-right:1px solid #b8b8b8"></div>
<div class="a" style="left:270.6px;top:887px;width:210.39999999999998px;height:1.3px;background:#111"></div>
<div class="a" style="left:270.6px;top:906.2px;width:210.39999999999998px;height:1.3px;background:#111"></div>
<div class="a" style="left:270.6px;top:924.6px;width:210.39999999999998px;height:1.3px;background:#111"></div>
<div class="a" style="left:340.7px;top:887px;width:1.2px;height:38.60000000000002px;background:#b8b8b8"></div>
<div class="a" style="left:411.2px;top:887px;width:1.2px;height:38.60000000000002px;background:#b8b8b8"></div>
<div class="t" style="left: 276.1px; top: 892.06px; font-size: 9.5px; -webkit-text-stroke: 0.25px rgb(34, 34, 34); color: rgb(34, 34, 34); letter-spacing: 0.007px;">Name</div>
<div class="a" style="left:316.45px;top:892.06px;width:120px;text-align:center;line-height:1;white-space:nowrap;font-size:9.5px"><span style="-webkit-text-stroke: 0.25px rgb(34, 34, 34); color: rgb(34, 34, 34); letter-spacing: 0.132px;">Temperature</span></div>
<div class="a" style="left:386.1px;top:892.06px;width:120px;text-align:center;line-height:1;white-space:nowrap;font-size:9.5px"><span style="-webkit-text-stroke: 0.25px rgb(34, 34, 34); color: rgb(34, 34, 34); letter-spacing: 0.166px;">Status</span></div>
<div class="t" style="left: 276.1px; top: 911.36px; font-size: 9.5px; color: rgb(34, 34, 34); letter-spacing: 0.113px;">Thermostat</div>
<div class="a" style="left:316.45px;top:911.36px;width:120px;text-align:center;line-height:1;white-space:nowrap;font-size:9.5px"><span style="color: rgb(34, 34, 34); letter-spacing: -0.078px;">23.4°C</span></div>
<div class="a" style="left:386.1px;top:911.36px;width:120px;text-align:center;line-height:1;white-space:nowrap;font-size:9.5px"><span style="color: rgb(34, 34, 34); letter-spacing: 0.198px;">Active</span></div>
<div class="t" style="left: 259.4px; top: 961.73px; font-size: 14.5px; color: rgb(51, 51, 51); letter-spacing: -0.185px;">Time series table</div>
<div class="a" style="left:259.4px;top:986.5px;width:233.60000000000002px;height:68.9px;border:1px solid #dddddd;border-radius:4px;background:#fff"></div>
<div class="a" style="left:270.7px;top:1001.2px;width:210.60000000000002px;height:38.399999999999864px;border-left:1px solid #b8b8b8;border-right:1px solid #b8b8b8"></div>
<div class="a" style="left:270.7px;top:1001.2px;width:210.60000000000002px;height:1.3px;background:#111"></div>
<div class="a" style="left:270.7px;top:1020.2px;width:210.60000000000002px;height:1.3px;background:#111"></div>
<div class="a" style="left:270.7px;top:1038.6px;width:210.60000000000002px;height:1.3px;background:#111"></div>
<div class="a" style="left:340.7px;top:1001.2px;width:1.2px;height:38.399999999999864px;background:#b8b8b8"></div>
<div class="a" style="left:411.2px;top:1001.2px;width:1.2px;height:38.399999999999864px;background:#b8b8b8"></div>
<div class="t" style="left: 276.2px; top: 1006.16px; font-size: 9.5px; -webkit-text-stroke: 0.25px rgb(34, 34, 34); color: rgb(34, 34, 34); letter-spacing: 0.209px;">Time stamp</div>
<div class="a" style="left:316.45px;top:1006.16px;width:120px;text-align:center;line-height:1;white-space:nowrap;font-size:9.5px"><span style="-webkit-text-stroke: 0.25px rgb(34, 34, 34); color: rgb(34, 34, 34); letter-spacing: 0.132px;">Temperature</span></div>
<div class="a" style="left:386.25px;top:1006.16px;width:120px;text-align:center;line-height:1;white-space:nowrap;font-size:9.5px"><span style="-webkit-text-stroke: 0.25px rgb(34, 34, 34); color: rgb(34, 34, 34); letter-spacing: 0.302px;">Humidity</span></div>
<div class="t" style="left: 276.2px; top: 1025.36px; font-size: 9.5px; color: rgb(34, 34, 34); letter-spacing: 0.037px;">Jun 17 2025</div>
<div class="a" style="left:316.45px;top:1025.36px;width:120px;text-align:center;line-height:1;white-space:nowrap;font-size:9.5px"><span style="color: rgb(34, 34, 34); letter-spacing: -0.058px;">23.4°C</span></div>
<div class="a" style="left:386.25px;top:1025.36px;width:120px;text-align:center;line-height:1;white-space:nowrap;font-size:9.5px"><span style="color: rgb(34, 34, 34); letter-spacing: -0.375px;">54%</span></div>
<div class="t" style="left: 259.2px; top: 1076.43px; font-size: 14.5px; color: rgb(51, 51, 51); letter-spacing: -0.233px;">Alarm table</div>
<!--/COMP-->
<!--CANVAS-->
<div class="a" style="left:1106px;top:106px;width:1px;height:972px;background:#dcdcdc"></div>
<div class="a" style="left:510.5px;top:124px;width:211px;height:31.5px;border-radius:16px;background:#e0e0e0"></div>
<div class="a" style="left:512.2px;top:126.3px;width:72.2px;height:27.3px;border-radius:14px;border:1.3px solid #00695c;background:#f3f8f8"></div>
<div class="t" style="left: 525px; top: 133.05px; font-size: 14px; -webkit-text-stroke: 0.45px rgb(0, 105, 92); color: rgb(0, 105, 92); letter-spacing: 0.212px;">Header</div>
<div class="t" style="left: 596.9px; top: 132.45px; font-size: 14px; color: rgb(141, 141, 141); letter-spacing: 0.159px;">First page header</div>
<div class="t" style="left: 913.5px; top: 132.45px; font-size: 14px; -webkit-text-stroke: 0.45px rgb(95, 95, 95); color: rgb(95, 95, 95); letter-spacing: 0.614px;">Collapse</div>
<svg style="left:974.4px;top:129.7px" width="21.2" height="21.2" viewBox="0 0 24 24" fill="#5f5f5f"><path d="M12 8l-6 6 1.41 1.41L12 10.83l4.59 4.58L18 14z"></path></svg>
<div class="a" style="left:1016px;top:122.3px;width:81.6px;height:34.8px;border:1px solid #d6d6d6;border-radius:4px;background:#f1f1f1"></div>
<div class="t" style="left: 1032.9px; top: 132.45px; font-size: 14px; -webkit-text-stroke: 0.45px rgb(0, 105, 92); color: rgb(0, 105, 92); letter-spacing: 0.479px;">Disable</div>
<div class="a" style="left:510px;top:165.8px;width:588px;height:100px;background:#fff"></div>
<div class="a" style="left:530.4px;top:166.6px;width:547.3px;height:98.8px;border:2px dashed #5c5c5c;border-radius:8px;background:#e1e1e1"></div>
<div class="t" style="left: 632.3px; top: 207.73px; font-size: 17.8px; -webkit-text-stroke: 0.45px rgb(95, 95, 95); color: rgb(95, 95, 95); letter-spacing: 0.226px;">Drop report components from sidebar here</div>
<div class="t" style="left: 510.6px; top: 283.56px; font-size: 18px; -webkit-text-stroke: 0.45px rgb(90, 90, 90); color: rgb(90, 90, 90); letter-spacing: 0.169px;">Content</div>
<div class="a" style="left:510px;top:312px;width:588px;height:201.3px;background:#fff"></div>
<div class="t" style="left: 530.4px; top: 346.17px; font-size: 11.5px; color: rgb(51, 51, 51); letter-spacing: 0.179px;">Lorem ipsum dolor sit amet, consectetur adipiscing elit. Donec libero orci, faucibus in iaculis quis,</div>
<div class="t" style="left: 530.4px; top: 363.97px; font-size: 11.5px; color: rgb(51, 51, 51); letter-spacing: 0.216px;">vestibulum sit amet ligula. Nulla facilisi. Ut ut iaculis tortor.</div>
<div class="t" style="left: 530.5px; top: 394.17px; font-size: 11.5px; color: rgb(51, 51, 51); letter-spacing: 0.32px;">${humidity}</div>
<div class="a" style="left:530.4px;top:421.4px;width:548px;height:72.2px;border:3px dotted #9e9e9e;background:#eeeeee"></div>
<div class="a" style="left:533.4px;top:416.4px;width:233.4px;height:68.4px;border:1px solid #dedede;border-radius:5px;background:#fff;box-shadow:0 1px 3px rgba(0,0,0,0.08)"></div>
<div class="a" style="left:544.5px;top:431.6px;width:210.89999999999998px;height:38.0px;border-left:1px solid #b8b8b8;border-right:1px solid #b8b8b8"></div>
<div class="a" style="left:544.5px;top:431.6px;width:210.89999999999998px;height:1.3px;background:#111"></div>
<div class="a" style="left:544.5px;top:450.6px;width:210.89999999999998px;height:1.3px;background:#111"></div>
<div class="a" style="left:544.5px;top:468.6px;width:210.89999999999998px;height:1.3px;background:#111"></div>
<div class="a" style="left:614.8px;top:431.6px;width:1.2px;height:38.0px;background:#b8b8b8"></div>
<div class="a" style="left:685px;top:431.6px;width:1.2px;height:38.0px;background:#b8b8b8"></div>
<div class="t" style="left: 550px; top: 436.3px; font-size: 9.8px; -webkit-text-stroke: 0.25px rgb(34, 34, 34); color: rgb(34, 34, 34); letter-spacing: 0.13px;">Time stamp</div>
<div class="a" style="left:590.4px;top:436.30px;width:120px;text-align:center;line-height:1;white-space:nowrap;font-size:9.8px"><span style="-webkit-text-stroke: 0.25px rgb(34, 34, 34); color: rgb(34, 34, 34); letter-spacing: -0.001px;">Temperature</span></div>
<div class="a" style="left:660.2px;top:436.30px;width:120px;text-align:center;line-height:1;white-space:nowrap;font-size:9.8px"><span style="-webkit-text-stroke: 0.25px rgb(34, 34, 34); color: rgb(34, 34, 34); letter-spacing: 0.254px;">Humidity</span></div>
<div class="t" style="left: 550px; top: 455.3px; font-size: 9.8px; color: rgb(34, 34, 34); letter-spacing: -0.005px;">Jun 17 2025</div>
<div class="a" style="left:590.4px;top:455.30px;width:120px;text-align:center;line-height:1;white-space:nowrap;font-size:9.8px"><span style="color: rgb(34, 34, 34); letter-spacing: -0.175px;">23.4°C</span></div>
<div class="a" style="left:660.2px;top:455.30px;width:120px;text-align:center;line-height:1;white-space:nowrap;font-size:9.8px"><span style="color: rgb(34, 34, 34); letter-spacing: -0.712px;">54%</span></div>
<div class="a" style="left:510.5px;top:530.6px;width:201.1px;height:31.5px;border-radius:16px;background:#e0e0e0"></div>
<div class="a" style="left:512.2px;top:532.9px;width:67.6px;height:27.3px;border-radius:14px;border:1.3px solid #00695c;background:#f3f8f8"></div>
<div class="t" style="left: 525px; top: 539.65px; font-size: 14px; -webkit-text-stroke: 0.45px rgb(0, 105, 92); color: rgb(0, 105, 92); letter-spacing: 0.402px;">Footer</div>
<div class="t" style="left: 592.3px; top: 539.05px; font-size: 14px; color: rgb(141, 141, 141); letter-spacing: 0.29px;">First page footer</div>
<div class="t" style="left: 913.5px; top: 539.05px; font-size: 14px; -webkit-text-stroke: 0.45px rgb(95, 95, 95); color: rgb(95, 95, 95); letter-spacing: 0.614px;">Collapse</div>
<svg style="left:974.4px;top:536.3px" width="21.2" height="21.2" viewBox="0 0 24 24" fill="#5f5f5f"><path d="M12 8l-6 6 1.41 1.41L12 10.83l4.59 4.58L18 14z"></path></svg>
<div class="a" style="left:1016px;top:528.9px;width:81.6px;height:34.8px;border:1px solid #d6d6d6;border-radius:4px;background:#f1f1f1"></div>
<div class="t" style="left: 1032.9px; top: 539.05px; font-size: 14px; -webkit-text-stroke: 0.45px rgb(0, 105, 92); color: rgb(0, 105, 92); letter-spacing: 0.479px;">Disable</div>
<div class="a" style="left:510px;top:572.4000000000001px;width:588px;height:100px;background:#fff"></div>
<div class="a" style="left:530.4px;top:573.2px;width:547.3px;height:98.8px;border:2px dashed #5c5c5c;border-radius:8px;background:#e1e1e1"></div>
<div class="t" style="left: 632.3px; top: 614.33px; font-size: 17.8px; -webkit-text-stroke: 0.45px rgb(95, 95, 95); color: rgb(95, 95, 95); letter-spacing: 0.226px;">Drop report components from sidebar here</div>
<!--/CANVAS-->
<!--RIGHT-->
<div class="a" style="left:1107px;top:106px;width:498px;height:100px;background:#f4f4f4"></div>
<div class="t" style="left: 1131.5px; top: 129.53px; font-size: 23px; color: rgb(31, 31, 31); letter-spacing: 0.85px;">Demo</div>
<div class="t" style="left: 1131.5px; top: 166.96px; font-size: 16px; color: rgb(99, 99, 99); letter-spacing: 0.196px;">Report template settings</div>
<div class="a" style="left:1123px;top:222px;width:467px;height:354.79999999999995px;background:#fff;border-radius:6px;box-shadow:0 1px 10px 1px rgba(0,0,0,0.055)"></div>
<div class="t" style="left: 1139.3px; top: 239.96px; font-size: 16px; -webkit-text-stroke: 0.45px rgb(33, 33, 33); color: rgb(33, 33, 33); letter-spacing: 0.359px;">Common settings</div>
<div class="a" style="left:1139.2px;top:273.3px;width:434.4px;height:56px;border:1px solid #dfdfdf;border-radius:6px"></div>
<div class="t" style="left: 1156.7px; top: 293.06px; font-size: 16px; color: rgb(33, 33, 33); letter-spacing: 0.244px;">Name</div>
<div class="a" style="left:1372.2px;top:281.3px;width:193.5999999999999px;height:39.90000000000001px;border:1px solid #dadada;border-radius:4px;background:#fff"></div>
<div class="t" style="left: 1384px; top: 292.95px; font-size: 14px; color: rgb(33, 33, 33); letter-spacing: 0.707px;">Demo</div>
<div class="a" style="left:1139.2px;top:345.5px;width:434.4px;height:56px;border:1px solid #dfdfdf;border-radius:6px"></div>
<div class="t" style="left: 1156.7px; top: 365.26px; font-size: 16px; color: rgb(33, 33, 33); letter-spacing: 0.107px;">File name pattern</div>
<div class="a" style="left:1372.2px;top:353.1px;width:193.5999999999999px;height:40.1px;border:1px solid #dadada;border-radius:4px;background:#fff"></div>
<div class="a" style="left:1384px;top:360px;width:146px;height:25px;overflow:hidden"><div class="t" style="left: 0px; top: 4.95px; font-size: 14px; color: rgb(33, 33, 33); letter-spacing: 0.497px;">report-%d{yyyy-MM-dd}</div></div>
<svg style="left:1539px;top:362px" width="22" height="22" viewBox="0 0 22 22"><circle cx="11" cy="11" r="9.1" fill="none" stroke="#00695c" stroke-width="1.9"></circle><path d="M8 8.6c0-1.8 1.4-3 3-3s3 1.2 3 2.9c0 2.1-2.6 2.2-2.6 4.4" fill="none" stroke="#00695c" stroke-width="1.8"></path><rect x="10.35" y="14.6" width="1.9" height="1.9" fill="#00695c"></rect></svg>
<div class="a" style="left:1139.2px;top:417.3px;width:434.4px;height:56px;border:1px solid #dfdfdf;border-radius:6px"></div>
<div class="t" style="left: 1156.7px; top: 437.06px; font-size: 16px; color: rgb(33, 33, 33); letter-spacing: 0.286px;">Default date format</div>
<div class="a" style="left:1372.2px;top:425.1px;width:193.5999999999999px;height:39.99999999999998px;border:1px solid #dadada;border-radius:4px;background:#fff"></div>
<div class="t" style="left: 1384px; top: 436.75px; font-size: 14px; color: rgb(33, 33, 33); letter-spacing: 0.356px;">2025-09-15 10:56:11</div>
<svg style="left:1537.2px;top:433px" width="23.5" height="23.5" viewBox="0 0 24 24" fill="#707070"><path d="M7 10l5 5 5-5z"></path></svg>
<div class="a" style="left:1139.2px;top:489.7px;width:434.4px;height:71.8px;border:1px solid #dfdfdf;border-radius:6px"></div>
<div class="t" style="left: 1156.7px; top: 517.36px; font-size: 16px; color: rgb(33, 33, 33); letter-spacing: 0.229px;">Description</div>
<div class="a" style="left:1372.2px;top:497.5px;width:193.5999999999999px;height:55.700000000000024px;border:1px solid #dadada;border-radius:4px;background:#fff"></div>
<div class="t" style="left: 1384px; top: 507.15px; font-size: 14px; color: rgb(140, 140, 140); letter-spacing: 0.482px;">Set</div>
<svg style="left:1542px;top:533px" width="12" height="12" viewBox="0 0 12 12" stroke="#555" stroke-width="0.9"><path d="M10.5 3.5L3.5 10.5M10.5 7.5L7.5 10.5"></path></svg>
<div class="a" style="left:1123px;top:592.6px;width:467px;height:387.79999999999995px;background:#fff;border-radius:6px;box-shadow:0 1px 10px 1px rgba(0,0,0,0.055)"></div>
<div class="t" style="left: 1139.3px; top: 611.26px; font-size: 16px; -webkit-text-stroke: 0.45px rgb(33, 33, 33); color: rgb(33, 33, 33); letter-spacing: 0.281px;">Page settings</div>
<div class="a" style="left:1139.2px;top:644.5px;width:434.4px;height:55.5px;border:1px solid #dfdfdf;border-radius:6px"></div>
<div class="t" style="left: 1156.7px; top: 664.01px; font-size: 16px; color: rgb(33, 33, 33); letter-spacing: -0.019px;">Paper size</div>
<div class="a" style="left:1346.4px;top:652.4px;width:219.39999999999986px;height:39.200000000000024px;border:1px solid #dadada;border-radius:4px;background:#fff"></div>
<div class="t" style="left: 1358px; top: 663.75px; font-size: 14px; color: rgb(33, 33, 33); letter-spacing: 0.855px;">A4</div>
<svg style="left:1537.2px;top:660.5px" width="23.5" height="23.5" viewBox="0 0 24 24" fill="#707070"><path d="M7 10l5 5 5-5z"></path></svg>
<div class="a" style="left:1139.2px;top:716.4px;width:434.4px;height:56px;border:1px solid #dfdfdf;border-radius:6px"></div>
<div class="t" style="left: 1156.7px; top: 736.16px; font-size: 16px; color: rgb(33, 33, 33); letter-spacing: 0.155px;">Orientation</div>
<div class="a" style="left:1367px;top:728px;width:96.8px;height:31.9px;border-radius:16px;background:#00695c"></div>
<svg style="left:1379px;top:736px" width="19" height="16" viewBox="0 0 19 16"><path d="M2.2 8.6L6.5 12.8L16.6 2.8" fill="none" stroke="#fff" stroke-width="1.5"></path></svg>
<div class="t" style="left: 1403.1px; top: 736.05px; font-size: 14px; color: rgb(255, 255, 255); letter-spacing: 0.594px;">Portrait</div>
<div class="a" style="left:1472.3px;top:728px;width:93.3px;height:31.9px;border-radius:16px;background:#e0e0e0"></div>
<div class="t" style="left: 1484.3px; top: 736.05px; font-size: 14px; color: rgb(31, 31, 31); letter-spacing: 0.221px;">Landscape</div>
<div class="a" style="left:1139.2px;top:788.7px;width:434.4px;height:103.3px;border:1px solid #dfdfdf;border-radius:6px"></div>
<div class="t" style="left: 1156.7px; top: 832.11px; font-size: 16px; color: rgb(33, 33, 33); letter-spacing: 0.302px;">Margins</div>
<svg style="left:1280px;top:800px" width="290" height="80" viewBox="1280 800 290 80" stroke="#5f5f5f" fill="#5f5f5f"><rect x="1284.8" y="807.8" width="1.8" height="16.2" stroke="none"></rect><path d="M1303 815.9H1290.5" fill="none" stroke-width="1.8"></path><path d="M1294.5 811.2L1289.3 815.9L1294.5 820.6" fill="none" stroke-width="1.8"></path><rect x="1301.2" y="855.8" width="1.8" height="16.4" stroke="none"></rect><path d="M1284.7 864H1297.5" fill="none" stroke-width="1.8"></path><path d="M1293.5 859.3L1298.7 864L1293.5 868.7" fill="none" stroke-width="1.8"></path><rect x="1546" y="807.2" width="16" height="1.6" stroke="none"></rect><path d="M1554 824.6V811.5" fill="none" stroke-width="1.8"></path><path d="M1549.6 815.2L1554 810.5L1558.4 815.2" fill="none" stroke-width="1.8"></path><rect x="1546" y="870.9" width="16" height="1.7" stroke="none"></rect><path d="M1554 855V866.5" fill="none" stroke-width="1.8"></path><path d="M1549.6 862.8L1554 867.5L1558.4 862.8" fill="none" stroke-width="1.8"></path></svg>
<div class="a" style="left:1314.3px;top:796.2px;width:105.0px;height:39.79999999999993px;border:1px solid #dadada;border-radius:4px;background:#fff"></div>
<div class="t" style="left: 1326.4px; top: 807.63px; font-size: 14.5px; color: rgb(33, 33, 33); letter-spacing: -0.126px;">20</div>
<div class="a" style="left:1384.0px;top:805.9000000000001px;width:14.7px;height:19.6px;background:#f6f6f6"></div>
<svg style="left:1384.0px;top:805.9000000000001px" width="14.7" height="19.6" viewBox="0 0 14.7 19.6" fill="#8a8a8a"><path d="M4.6 7.6L7.35 2.6L10.1 7.6z"></path><path d="M4.6 12.6L7.35 17.6L10.1 12.6z"></path></svg>
<div class="t" style="left: 1403.4px; top: 808.05px; font-size: 14px; color: rgb(160, 160, 160); letter-spacing: 1.492px;">pt</div>
<div class="a" style="left:1314.3px;top:844.2px;width:105.0px;height:39.899999999999956px;border:1px solid #dadada;border-radius:4px;background:#fff"></div>
<div class="t" style="left: 1326.4px; top: 855.63px; font-size: 14.5px; color: rgb(33, 33, 33); letter-spacing: -0.126px;">20</div>
<div class="a" style="left:1384.0px;top:853.9000000000001px;width:14.7px;height:19.6px;background:#f6f6f6"></div>
<svg style="left:1384.0px;top:853.9000000000001px" width="14.7" height="19.6" viewBox="0 0 14.7 19.6" fill="#8a8a8a"><path d="M4.6 7.6L7.35 2.6L10.1 7.6z"></path><path d="M4.6 12.6L7.35 17.6L10.1 12.6z"></path></svg>
<div class="t" style="left: 1403.4px; top: 856.05px; font-size: 14px; color: rgb(160, 160, 160); letter-spacing: 1.492px;">pt</div>
<div class="a" style="left:1428.3px;top:796.2px;width:105.20000000000005px;height:39.79999999999993px;border:1px solid #dadada;border-radius:4px;background:#fff"></div>
<div class="t" style="left: 1440.4px; top: 807.63px; font-size: 14.5px; color: rgb(33, 33, 33); letter-spacing: -0.126px;">20</div>
<div class="a" style="left:1498.0px;top:805.9000000000001px;width:14.7px;height:19.6px;background:#f6f6f6"></div>
<svg style="left:1498.0px;top:805.9000000000001px" width="14.7" height="19.6" viewBox="0 0 14.7 19.6" fill="#8a8a8a"><path d="M4.6 7.6L7.35 2.6L10.1 7.6z"></path><path d="M4.6 12.6L7.35 17.6L10.1 12.6z"></path></svg>
<div class="t" style="left: 1517.4px; top: 808.05px; font-size: 14px; color: rgb(160, 160, 160); letter-spacing: 1.492px;">pt</div>
<div class="a" style="left:1428.3px;top:844.2px;width:105.20000000000005px;height:39.899999999999956px;border:1px solid #dadada;border-radius:4px;background:#fff"></div>
<div class="t" style="left: 1440.4px; top: 855.63px; font-size: 14.5px; color: rgb(33, 33, 33); letter-spacing: -0.126px;">20</div>
<div class="a" style="left:1498.0px;top:853.9000000000001px;width:14.7px;height:19.6px;background:#f6f6f6"></div>
<svg style="left:1498.0px;top:853.9000000000001px" width="14.7" height="19.6" viewBox="0 0 14.7 19.6" fill="#8a8a8a"><path d="M4.6 7.6L7.35 2.6L10.1 7.6z"></path><path d="M4.6 12.6L7.35 17.6L10.1 12.6z"></path></svg>
<div class="t" style="left: 1517.4px; top: 856.05px; font-size: 14px; color: rgb(160, 160, 160); letter-spacing: 1.492px;">pt</div>
<div class="a" style="left:1139.2px;top:908.3px;width:434.4px;height:56.1px;border:1px solid #dfdfdf;border-radius:6px"></div>
<div class="t" style="left: 1156.7px; top: 928.11px; font-size: 16px; color: rgb(33, 33, 33); letter-spacing: 0.148px;">Background</div>
<div class="a" style="left:1526.4px;top:916.2px;width:39.3px;height:39.3px;border:1px solid #dadada;border-radius:4px;background:#fff"></div>
<div class="a" style="left:1534.2px;top:924px;width:23.6px;height:23.6px;border:1px solid #d6d6d6;border-radius:3px;background:#fff"></div>
<!--/RIGHT-->
<!--ARROW-->
<svg style="left:0;top:0" width="1605" height="1078" viewBox="0 0 1605 1078"><polygon points="545,477 549.2,503.7 542.6,502.3 431.9,998.4 430.3,998 536.2,500.9 529.6,499.5" fill="#f35252"></polygon></svg>
<!--/ARROW-->

</body></html>
